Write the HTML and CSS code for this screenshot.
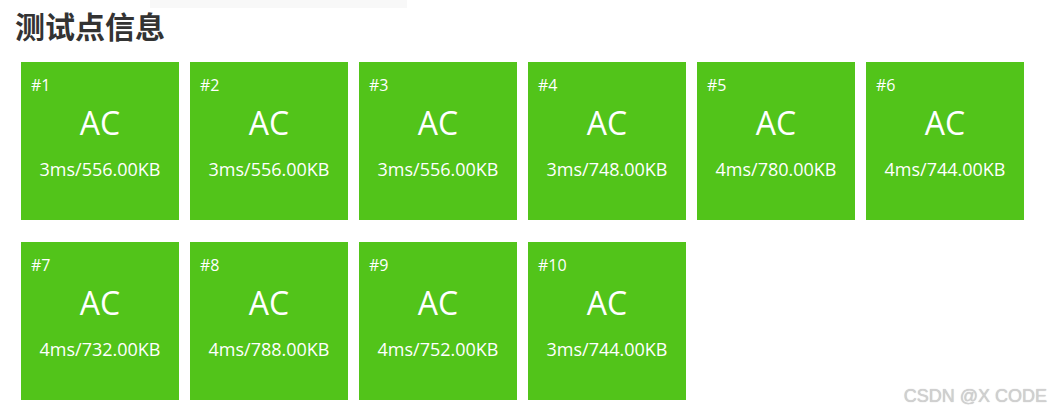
FILE: index.html
```html
<!DOCTYPE html>
<html lang="zh">
<head>
<meta charset="utf-8">
<title>测试点信息</title>
<link rel="stylesheet" href="styles.css">
</head>
<body>
<div class="page">
  <div class="topbar"></div>
  <h2 class="title">测试点信息</h2>
  <div class="grid">
    <div class="tile"><div class="num">#1</div><div class="res">AC</div><div class="stat">3ms/556.00KB</div></div>
    <div class="tile"><div class="num">#2</div><div class="res">AC</div><div class="stat">3ms/556.00KB</div></div>
    <div class="tile"><div class="num">#3</div><div class="res">AC</div><div class="stat">3ms/556.00KB</div></div>
    <div class="tile"><div class="num">#4</div><div class="res">AC</div><div class="stat">3ms/748.00KB</div></div>
    <div class="tile"><div class="num">#5</div><div class="res">AC</div><div class="stat">4ms/780.00KB</div></div>
    <div class="tile"><div class="num">#6</div><div class="res">AC</div><div class="stat">4ms/744.00KB</div></div>
    <div class="tile"><div class="num">#7</div><div class="res">AC</div><div class="stat">4ms/732.00KB</div></div>
    <div class="tile"><div class="num">#8</div><div class="res">AC</div><div class="stat">4ms/788.00KB</div></div>
    <div class="tile"><div class="num">#9</div><div class="res">AC</div><div class="stat">4ms/752.00KB</div></div>
    <div class="tile"><div class="num">#10</div><div class="res">AC</div><div class="stat">3ms/744.00KB</div></div>
  </div>
  <div class="watermark">CSDN @X CODE</div>
</div>
</body>
</html>
```

FILE: styles.css
```css
html, body {
  margin: 0;
  padding: 0;
  background: #ffffff;
}
.page {
  position: relative;
  width: 1051px;
  height: 414px;
  overflow: hidden;
}
.topbar {
  margin-left: 150px;
  width: 257px;
  height: 8px;
  background: #f8f8f8;
}
.title {
  margin: 0 0 0 15px;
  font-family: "Noto Sans CJK SC", sans-serif;
  font-weight: 700;
  font-size: 30px;
  line-height: 34px;
  color: #333333;
}
.grid {
  display: grid;
  grid-template-columns: repeat(6, 158px);
  column-gap: 11px;
  row-gap: 22px;
  margin: 20px 0 0 21px;
}
.tile {
  width: 158px;
  height: 158px;
  box-sizing: border-box;
  background: #52c41a;
  color: #ffffff;
  font-family: "Open Sans", sans-serif;
  padding: 13px 10px 0 10px;
}
.num {
  font-size: 16px;
  line-height: 20px;
}
.res {
  margin-top: 8px;
  font-size: 32px;
  line-height: 40px;
  text-align: center;
}
.stat {
  margin-top: 14px;
  font-size: 18px;
  line-height: 24px;
  text-align: center;
}
.watermark {
  position: absolute;
  right: 4px;
  bottom: 7px;
  font-family: "Liberation Sans", Arial, sans-serif;
  font-size: 18px;
  color: #d0d0d0;
  text-shadow: 0 0 1px #b8b8b8;
}
```
